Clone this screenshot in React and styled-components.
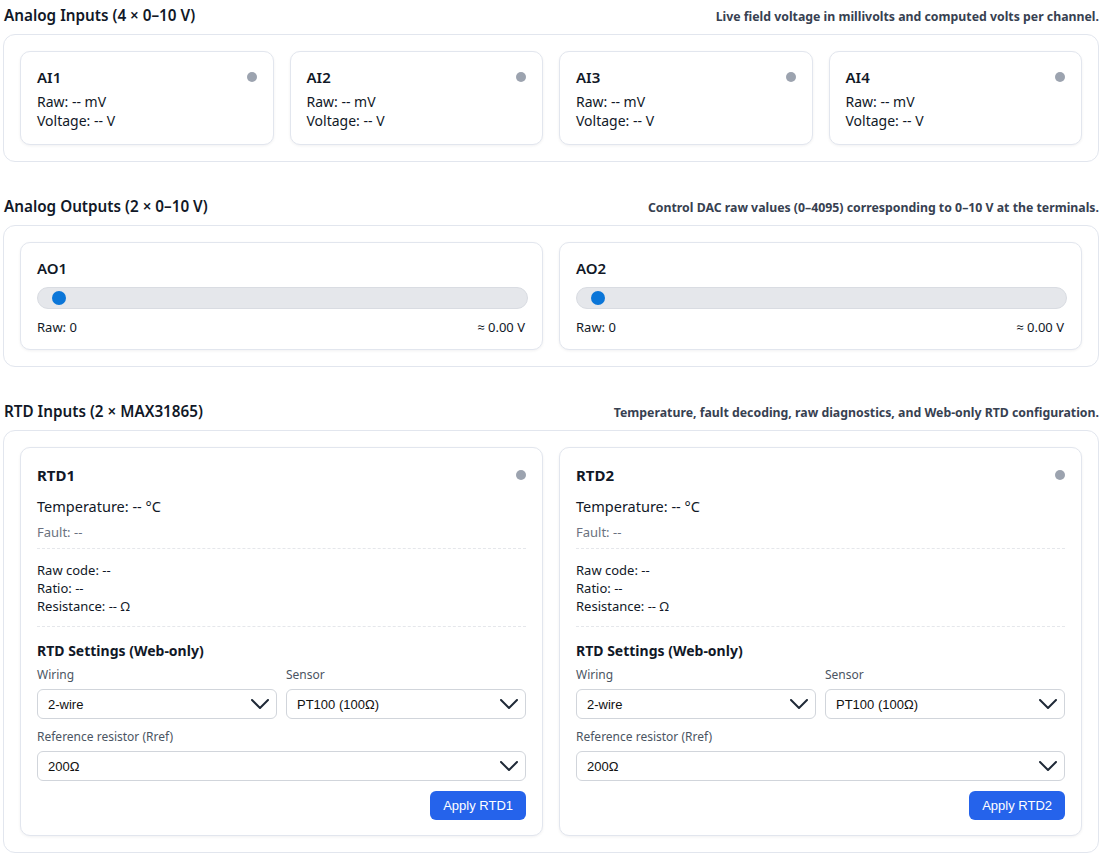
import React from "react";
import styled, { createGlobalStyle } from "styled-components";

const GlobalStyle = createGlobalStyle`
  body {
    margin: 0;
    background: #ffffff;
    font-family: "Noto Sans", "Open Sans", sans-serif;
    color: #111827;
  }
`;

const analogInputs = ["AI1", "AI2", "AI3", "AI4"];
const analogOutputs = ["AO1", "AO2"];
const rtds = ["RTD1", "RTD2"];

const Chevron = () => (
  <svg width="18" height="10" viewBox="0 0 18 10" fill="none">
    <path d="M1 1l8 8 8-8" stroke="#1f2937" strokeWidth="2" strokeLinecap="round" strokeLinejoin="round" />
  </svg>
);

const Select = ({ value }) => (
  <SelectBox>
    <span>{value}</span>
    <Chevron />
  </SelectBox>
);

const Section = ({ title, desc, cols, children }) => (
  <SectionWrap>
    <Header>
      <Title>{title}</Title>
      <Desc>{desc}</Desc>
    </Header>
    <Panel $cols={cols}>{children}</Panel>
  </SectionWrap>
);

const App = () => {
  return (
    <Page>
      <GlobalStyle />
      <Section
        title="Analog Inputs (4 × 0–10 V)"
        desc="Live field voltage in millivolts and computed volts per channel."
        cols={4}
      >
        {analogInputs.map((name) => (
          <Card key={name}>
            <CardHead>
              <CardTitle>{name}</CardTitle>
              <Dot />
            </CardHead>
            <Line>Raw: -- mV</Line>
            <Line>Voltage: -- V</Line>
          </Card>
        ))}
      </Section>

      <Section
        title="Analog Outputs (2 × 0–10 V)"
        desc="Control DAC raw values (0–4095) corresponding to 0–10 V at the terminals."
        cols={2}
      >
        {analogOutputs.map((name) => (
          <Card key={name}>
            <CardTitle>{name}</CardTitle>
            <Range type="range" min="0" max="4095" defaultValue="0" />
            <RangeInfo>
              <span>Raw: 0</span>
              <span>≈ 0.00 V</span>
            </RangeInfo>
          </Card>
        ))}
      </Section>

      <Section
        title="RTD Inputs (2 × MAX31865)"
        desc="Temperature, fault decoding, raw diagnostics, and Web-only RTD configuration."
        cols={2}
      >
        {rtds.map((name) => (
          <Card key={name} $pb="15px">
            <CardHead $tall>
              <RtdTitle>{name}</RtdTitle>
              <Dot />
            </CardHead>
            <Temp>Temperature: -- °C</Temp>
            <Fault>Fault: --</Fault>
            <Diag>
              <SmallLine>Raw code: --</SmallLine>
              <SmallLine>Ratio: --</SmallLine>
              <SmallLine>Resistance: -- Ω</SmallLine>
            </Diag>
            <Settings>
              <SettingsTitle>RTD Settings (Web-only)</SettingsTitle>
              <FieldGrid>
                <Field>
                  <Label>Wiring</Label>
                  <Select value="2-wire" />
                </Field>
                <Field>
                  <Label>Sensor</Label>
                  <Select value="PT100 (100Ω)" />
                </Field>
              </FieldGrid>
              <Field $spaced>
                <Label>Reference resistor (Rref)</Label>
                <Select value="200Ω" />
              </Field>
              <Actions>
                <ApplyButton>Apply {name}</ApplyButton>
              </Actions>
            </Settings>
          </Card>
        ))}
      </Section>
    </Page>
  );
};

const Page = styled.div`
  padding: 5px 13px 10px 3px;
`;

const SectionWrap = styled.section`
  margin-bottom: 34px;
`;

const Header = styled.div`
  display: flex;
  align-items: baseline;
  justify-content: space-between;
  height: 20px;
  margin-bottom: 9px;
`;

const Title = styled.h2`
  margin: 0 0 0 1px;
  font-size: 15.25px;
  font-weight: 600;
  line-height: 20px;
  color: #111827;
`;

const Desc = styled.p`
  margin: 0;
  font-size: 12.3px;
  font-weight: 700;
  color: #374151;
`;

const Panel = styled.div`
  display: grid;
  grid-template-columns: repeat(${(p) => p.$cols}, 1fr);
  gap: 16px;
  padding: 16px;
  border: 1px solid #e2e6ee;
  border-radius: 12px;
  background: #fff;
`;

const Card = styled.div`
  border: 1px solid #e2e6ee;
  border-radius: 10px;
  padding: 16px 16px ${(p) => p.$pb || "14px"};
  background: #fff;
  box-shadow: 0 1px 3px rgba(15, 23, 42, 0.06);
`;

const CardHead = styled.div`
  display: flex;
  align-items: center;
  justify-content: space-between;
  height: ${(p) => (p.$tall ? "22px" : "18px")};
  margin-bottom: ${(p) => (p.$tall ? "8px" : "6px")};
`;

const CardTitle = styled.div`
  font-size: 15px;
  font-weight: 600;
  line-height: 18px;
`;

const RtdTitle = styled.div`
  font-size: 15px;
  font-weight: 700;
  line-height: 22px;
`;

const Dot = styled.span`
  width: 10px;
  height: 10px;
  border-radius: 50%;
  background: #9ca3af;
`;

const Line = styled.div`
  font-size: 14px;
  line-height: 19px;
`;

const Range = styled.input`
  -webkit-appearance: none;
  appearance: none;
  display: block;
  width: calc(100% + 2px);
  height: 22px;
  margin: 10px 0 0 0;
  padding: 0 4px;
  border: 1px solid #d9dce2;
  border-radius: 999px;
  background: #e5e7eb;
  box-sizing: border-box;

  &::-webkit-slider-thumb {
    -webkit-appearance: none;
    width: 14px;
    height: 14px;
    border-radius: 50%;
    background: #0b76d8;
    border: none;
    margin-left: 10px;
  }
`;

const RangeInfo = styled.div`
  display: flex;
  justify-content: space-between;
  margin-top: 10px;
  font-size: 13px;
  line-height: 16px;
  padding-right: 1px;
`;

const Temp = styled.div`
  font-size: 14.5px;
  line-height: 24px;
`;

const Fault = styled.div`
  margin-top: 5px;
  font-size: 13px;
  line-height: 18px;
  color: #6b7280;
  padding-bottom: 7px;
  border-bottom: 1px dashed #e5e7eb;
`;

const Diag = styled.div`
  padding: 12px 0 11px;
  border-bottom: 1px dashed #e5e7eb;
`;

const SmallLine = styled.div`
  font-size: 13px;
  line-height: 18px;
`;

const Settings = styled.div`
  padding-top: 15px;
`;

const SettingsTitle = styled.div`
  font-size: 14px;
  font-weight: 700;
  line-height: 18px;
`;

const FieldGrid = styled.div`
  display: grid;
  grid-template-columns: 1fr 1fr;
  gap: 9px;
  margin-top: 6px;
`;

const Field = styled.div`
  display: flex;
  flex-direction: column;
  gap: 5px;
  margin-top: ${(p) => (p.$spaced ? "9px" : "0")};
`;

const Label = styled.div`
  font-size: 12px;
  line-height: 18px;
  color: #4b5563;
`;

const SelectBox = styled.div`
  display: flex;
  align-items: center;
  justify-content: space-between;
  height: 30px;
  box-sizing: border-box;
  padding: 0 7px 0 10px;
  border: 1px solid #d1d5db;
  border-radius: 6px;
  background: #fff;
  font-family: "Liberation Sans", Arial, sans-serif;
  font-size: 13px;
  color: #111;
`;

const Actions = styled.div`
  display: flex;
  justify-content: flex-end;
  margin-top: 10px;
`;

const ApplyButton = styled.button`
  height: 29px;
  padding: 0 13px;
  border: none;
  border-radius: 6px;
  background: #2563eb;
  color: #fff;
  font-family: "Liberation Sans", Arial, sans-serif;
  font-size: 13px;
  cursor: pointer;
`;

export default App;
